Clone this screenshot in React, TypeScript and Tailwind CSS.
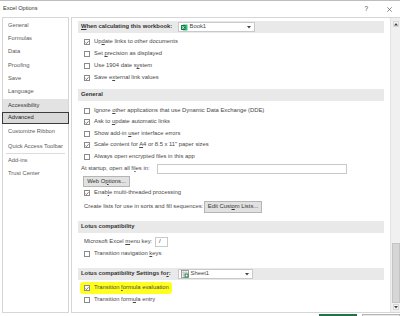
import type { ReactNode } from 'react'

const sideItems = [
  { label: 'General', h: 'h-[13.3px]' },
  { label: 'Formulas', h: 'h-[13.3px]' },
  { label: 'Data', h: 'h-[13.3px]' },
  { label: 'Proofing', h: 'h-[13.3px]' },
  { label: 'Save', h: 'h-[13.3px]' },
  { label: 'Language', h: 'h-[13.3px]' },
]

function U({ children }: { children: ReactNode }) {
  return <span className="underline underline-offset-[1px]">{children}</span>
}

function Check({ checked }: { checked?: boolean }) {
  return (
    <span className="w-[6px] h-[6px] border border-[#8a8a8a] bg-white flex items-center justify-center shrink-0">
      {checked && (
        <svg width="5" height="5" viewBox="0 0 5 5">
          <path d="M0.6 2.6 L1.9 3.8 L4.4 0.9" fill="none" stroke="#333" strokeWidth="0.8" />
        </svg>
      )}
    </span>
  )
}

function Row({ checked, h = 'h-[12px]', children }: { checked?: boolean; h?: string; children: ReactNode }) {
  return (
    <div className={`flex items-center gap-[4px] pl-[12px] ${h}`}>
      <Check checked={checked} />
      <span className="text-[#484848] whitespace-nowrap">{children}</span>
    </div>
  )
}

function Header({ mt, children }: { mt: string; children: ReactNode }) {
  return (
    <div className={`${mt} ml-[6px] mr-[6px] h-[12px] bg-[#e9e9e9] flex items-center pl-[3px]`}>
      {children}
    </div>
  )
}

function ExcelIcon() {
  return (
    <svg width="7" height="7" viewBox="0 0 7 7">
      <rect x="2" y="0.5" width="4.5" height="6" fill="#33c481" />
      <rect x="0" y="1" width="4.5" height="5" fill="#107c41" />
      <path d="M1 2 L3.4 5 M3.4 2 L1 5" stroke="#fff" strokeWidth="0.7" />
    </svg>
  )
}

function SheetIcon() {
  return (
    <svg width="8" height="8" viewBox="0 0 8 8">
      <rect x="0.5" y="0.5" width="7" height="7" fill="#fff" stroke="#777" strokeWidth="0.7" />
      <path d="M0.5 2.8 H7.5 M0.5 5 H7.5 M2.8 0.5 V7.5 M5 0.5 V7.5" stroke="#999" strokeWidth="0.5" />
      <rect x="3.6" y="3.6" width="3.9" height="3.9" fill="#1e8a4c" />
      <rect x="4.6" y="4.6" width="1.9" height="1.9" fill="#fff" />
    </svg>
  )
}

function Dropdown({ icon, label, w }: { icon: ReactNode; label: string; w: string }) {
  return (
    <div className={`${w} h-[10px] bg-white border border-[#c9c9c9] flex items-center pl-[2px] pr-[3px] gap-[1.5px]`}>
      {icon}
      <span className="text-[#444] font-normal flex-1">{label}</span>
      <svg width="4" height="3" viewBox="0 0 4 3">
        <path d="M0 0 H4 L2 2.5 Z" fill="#444" />
      </svg>
    </div>
  )
}

export default function App() {
  return (
    <div className="w-[400px] h-[316px] bg-white overflow-hidden border-t border-[#bdbdbd] font-['Liberation_Sans',Arial,sans-serif] text-[5.85px] leading-none relative">
      {/* title bar */}
      <div className="h-[16px] flex items-center pl-[3px] pr-[8px]">
        <span className="text-[5.6px] text-[#333] flex-1">Excel Options</span>
        <span className="text-[6.5px] text-[#444] mr-[19px]">?</span>
        <svg width="5" height="5" viewBox="0 0 5 5">
          <path d="M0.3 0.3 L4.7 4.7 M4.7 0.3 L0.3 4.7" stroke="#555" strokeWidth="0.7" />
        </svg>
      </div>

      <div className="flex h-[296px] pl-[2px] gap-[2px]">
        {/* sidebar */}
        <div className="w-[67px] border border-[#d6d6d6] pt-[1px] text-[5.75px] text-[#5a5a5a]">
          {sideItems.map((it) => (
            <div key={it.label} className={`${it.h} flex items-center pl-[5px]`}>
              {it.label}
            </div>
          ))}
          <div className="h-[13.3px] flex items-center pl-[5px] bg-[#e3e3e3] text-[#333]">Accessibility</div>
          <div className="h-[12.3px] flex items-center pl-[5px] bg-[#d9d9d9] border-[1.5px] border-[#3c3c3c] text-[#222] -ml-[1px] -mr-[1px]">
            Advanced
          </div>
          <div className="h-[15px] flex items-center pl-[5px]">Customize Ribbon</div>
          <div className="h-[14px] flex items-center pl-[5px]">Quick Access Toolbar</div>
          <div className="mx-[3px] h-px bg-[#dcdcdc]" />
          <div className="h-[13px] flex items-center pl-[5px]">Add-ins</div>
          <div className="h-[13px] flex items-center pl-[5px]">Trust Center</div>
        </div>

        {/* main panel */}
        <div className="flex-1 border border-[#d6d6d6] border-r-0 flex">
          <div className="flex-1 flex flex-col">
            <Header mt="mt-[3px]">
              <span className="w-[97px] font-bold text-[#333]">
                <U>W</U>hen calculating this workbook:
              </span>
              <Dropdown icon={<ExcelIcon />} label="Book1" w="w-[77px]" />
            </Header>
            <div className="mt-[3px]">
              <Row checked>
                Up<U>d</U>ate links to other documents
              </Row>
              <Row>
                Set <U>p</U>recision as displayed
              </Row>
              <Row>
                Use 1904 date s<U>y</U>stem
              </Row>
              <Row checked>
                Save e<U>x</U>ternal link values
              </Row>
            </div>

            <Header mt="mt-[5px]">
              <span className="font-bold text-[#333]">General</span>
            </Header>
            <div className="mt-[4px]">
              <Row h="h-[11.5px]">
                Ignore <U>o</U>ther applications that use Dynamic Data Exchange (DDE)
              </Row>
              <Row h="h-[11.5px]" checked>
                Ask to <U>u</U>pdate automatic links
              </Row>
              <Row h="h-[11.5px]">
                Show add-in <U>u</U>ser interface errors
              </Row>
              <Row h="h-[11.5px]" checked>
                Scale content for <U>A</U>4 or 8.5 x 11" paper sizes
              </Row>
              <Row h="h-[11.5px]">Always open encrypted files in this app</Row>
            </div>
            <div className="mt-[1px] h-[11px] flex items-center pl-[9px]">
              <span className="w-[76px] text-[#484848]">
                At startup, open all fi<U>l</U>es in:
              </span>
              <div className="w-[190px] h-[10px] border border-[#c9c9c9] bg-white" />
            </div>
            <div className="mt-[1.5px] ml-[11px] w-[47px] h-[11px] bg-[#e1e1e1] border border-[#b5b5b5] flex items-center justify-center text-[#333]">
              Web O<U>p</U>tions...
            </div>
            <Row checked>
              Enab<U>l</U>e multi-threaded processing
            </Row>
            <div className="mt-[2px] h-[12px] flex items-center pl-[12px]">
              <span className="w-[120px] text-[#484848]">Create lists for use in sorts and fill sequences:</span>
              <div className="w-[58px] h-[12px] bg-[#e1e1e1] border border-[#b5b5b5] flex items-center justify-center text-[#333]">
                Edit Cust<U>o</U>m Lists...
              </div>
            </div>

            <Header mt="mt-[8px]">
              <span className="font-bold text-[#333]">Lotus compatibility</span>
            </Header>
            <div className="mt-[3.5px] h-[11px] flex items-center pl-[12px]">
              <span className="w-[71px] text-[#484848]">
                Microsoft Excel <U>m</U>enu key:
              </span>
              <div className="w-[13px] h-[10px] border border-[#c9c9c9] bg-white flex items-center pl-[3px] text-[#333]">/</div>
            </div>
            <Row>
              Transition navigation <U>k</U>eys
            </Row>

            <Header mt="mt-[8.5px]">
              <span className="w-[97px] font-bold text-[#333]">
                Lotus compatibility Settings fo<U>r</U>:
              </span>
              <Dropdown icon={<SheetIcon />} label="Sheet1" w="w-[75px]" />
            </Header>
            <div className="mt-[2px] ml-[8px] w-[92px] h-[12px] bg-[#ffff1f] rounded-[3px] flex items-center pl-[4px] gap-[4px]">
              <Check checked />
              <span className="text-[#484848] whitespace-nowrap">
                Transition <U>f</U>ormula evaluation
              </span>
            </div>
            <Row>
              Transition form<U>u</U>la entry
            </Row>
          </div>

          {/* scrollbar */}
          <div className="w-[10px] bg-[#f0f0f0] border-l border-[#e2e2e2] flex flex-col items-center">
            <div className="mt-[3px] w-[6px] h-[6px] bg-[#f7f7f7] border border-[#d6d6d6] flex items-center justify-center">
              <svg width="4" height="3" viewBox="0 0 4 3">
                <path d="M0 2.5 H4 L2 0 Z" fill="#444" />
              </svg>
            </div>
            <div className="flex-1" />
            <div className="w-[8px] h-[60px] bg-[#d6d6d6] border border-[#c4c4c4]" />
            <div className="mt-[1px] mb-[2px] w-[6px] h-[6px] bg-[#f7f7f7] border border-[#d6d6d6] flex items-center justify-center">
              <svg width="4" height="3" viewBox="0 0 4 3">
                <path d="M0 0 H4 L2 2.5 Z" fill="#444" />
              </svg>
            </div>
          </div>
        </div>
      </div>

      {/* dialog buttons, cut off */}
      <div className="flex justify-end gap-[5px] mt-[1px]">
        <div className="w-[38px] h-[4px] border-t-2 border-x border-[#217346] bg-[#e9e9e9]" />
        <div className="w-[38px] h-[4px] border-t border-x border-[#b5b5b5] bg-[#e9e9e9]" />
      </div>
    </div>
  )
}
